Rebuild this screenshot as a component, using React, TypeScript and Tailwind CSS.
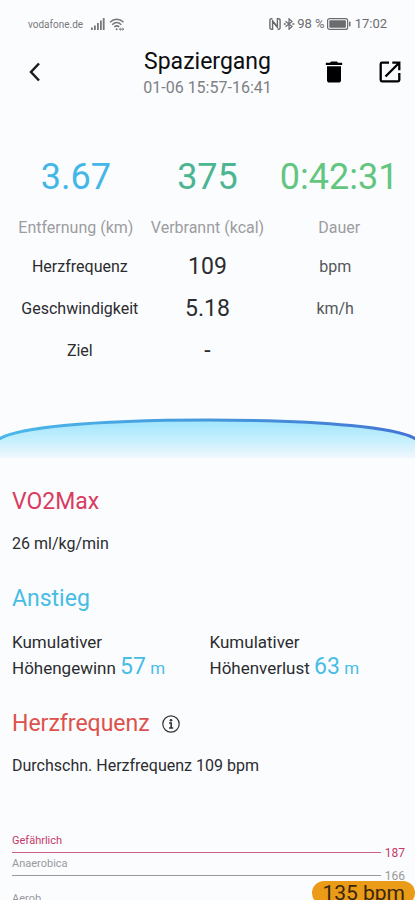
import { MdDelete } from 'react-icons/md';

const totals = [
  { value: '3.67', label: 'Entfernung (km)', color: 'text-[#45b6e8]' },
  { value: '375', label: 'Verbrannt (kcal)', color: 'text-[#4cb592]' },
  { value: '0:42:31', label: 'Dauer', color: 'text-[#62c67f]' },
];

const metrics = [
  { label: 'Herzfrequenz', value: '109', unit: 'bpm' },
  { label: 'Geschwindigkeit', value: '5.18', unit: 'km/h' },
  { label: 'Ziel', value: '-', unit: '' },
];

const climbs = [
  { label: 'Höhengewinn', value: '57' },
  { label: 'Höhenverlust', value: '63' },
];

function StatusBar() {
  return (
    <div className="flex h-12 shrink-0 items-center justify-between px-7 text-[#77787b]">
      <div className="flex items-center">
        <span className="text-[10px]">vodafone.de</span>
        <svg className="ml-2 h-3 w-[14px]" viewBox="0 0 14 12" fill="currentColor">
          <rect x="0" y="9.5" width="1.8" height="2.5" />
          <rect x="3" y="7.5" width="1.8" height="4.5" />
          <rect x="6" y="5" width="1.8" height="7" />
          <rect x="9" y="2.5" width="1.8" height="9.5" />
          <rect x="11.8" y="0" width="1.8" height="12" />
        </svg>
        <svg className="ml-1 h-[13px] w-4" viewBox="0 0 16 13" fill="none" stroke="currentColor" strokeWidth="1.5">
          <path d="M1 4.2C5 .2 10.5 .2 14.5 4.2" />
          <path d="M3.2 6.7C6 4 9.5 4 12.3 6.7" />
          <path d="M5.3 9C7 7.5 8.6 7.5 10.2 9" />
          <circle cx="7.7" cy="11.3" r="1" fill="currentColor" stroke="none" />
          <path d="M10.3 11.2h4.5M11.8 10l-1.3 1.2 1.3 1.2M13.5 10l1.3 1.2-1.3 1.2" strokeWidth="1" />
        </svg>
      </div>
      <div className="flex items-center text-[13px] text-[#6b6c6f]">
        <svg className="h-3 w-3" viewBox="0 0 12 12" fill="none" stroke="currentColor" strokeWidth="1.4">
          <path d="M3.4 .8H2.2Q.9 .8 .9 2.2v7.600q0 1.400 1.300 1.400H3.600V3l4.600 6" />
          <path d="M8.600 11.200h1.200q1.300 0 1.300-1.400V2.200q0-1.400-1.300-1.400H8.400V9L3.600 3" />
        </svg>
        <svg className="ml-0.5 h-3 w-3" viewBox="0 0 12 12" fill="none" stroke="currentColor" strokeWidth="1.2">
          <path d="M2.500 3.300l6.500 5.200-3 2.700V.8l3 2.700-6.500 5.200" />
          <path d="M.8 6h2M9.300 6h2" strokeWidth="1.5" />
        </svg>
        <span className="ml-0.5">98 %</span>
        <svg className="ml-0.5 h-3 w-6" viewBox="0 0 24 12">
          <rect x=".6" y=".6" width="20" height="10.8" rx="2" fill="none" stroke="currentColor" strokeWidth="1.2" />
          <rect x="2.3" y="2.3" width="16.6" height="7.4" rx=".6" fill="currentColor" />
          <rect x="22" y="3.5" width="1.5" height="5" rx=".7" fill="currentColor" />
        </svg>
        <span className="ml-1">17:02</span>
      </div>
    </div>
  );
}

function Header() {
  return (
    <header className="grid shrink-0 grid-cols-[1fr_auto_1fr] px-[11px]">
      <button type="button" aria-label="Zurück" className="flex h-12 w-12 items-center justify-center text-[#1b1c1e]">
        <svg className="h-6 w-6" viewBox="0 0 24 24" fill="none" stroke="currentColor" strokeWidth="2.5">
          <path d="M16 3.500L8 12l8 8.500" />
        </svg>
      </button>
      <div className="text-center">
        <h1 className="text-[23px] leading-7 text-[#0c0d0f]">Spaziergang</h1>
        <p className="text-[16px] leading-6 text-[#7e8083]">01-06 15:57-16:41</p>
      </div>
      <div className="flex h-12 items-center justify-end gap-7 text-black">
        <button type="button" aria-label="Löschen">
          <MdDelete className="h-7 w-7" />
        </button>
        <button type="button" aria-label="Teilen">
          <svg className="h-7 w-7" viewBox="0 0 28 28" fill="none" stroke="currentColor" strokeWidth="2.3">
            <path d="M13 4.700H6Q4.700 4.700 4.700 6v16q0 1.300 1.300 1.300h16q1.300 0 1.300-1.300v-7" />
            <path d="M16.300 4.700h7v7.500M23 5L9.500 18.500" />
          </svg>
        </button>
      </div>
    </header>
  );
}

function Summary() {
  return (
    <section>
      <dl className="grid grid-cols-3 px-2.5 pt-[57px] text-center">
        {totals.map((t) => (
          <div key={t.label} className="flex flex-col-reverse gap-[19px]">
            <dt className="text-[16px] leading-6 text-[#9b9da0]">{t.label}</dt>
            <dd className={`text-[36px] leading-10 ${t.color}`}>{t.value}</dd>
          </div>
        ))}
      </dl>
      <div className="px-4 pt-1.5">
        <table className="w-full table-fixed text-center text-[16px] text-[#2b2c2f]">
          <tbody>
            {metrics.map((m) => (
              <tr key={m.label} className="h-[42px]">
                <th scope="row" className="p-0 font-normal">{m.label}</th>
                <td className="p-0 text-[23px] leading-8">{m.value}</td>
                <td className="p-0 text-[#55575a]">{m.unit}</td>
              </tr>
            ))}
          </tbody>
        </table>
      </div>
    </section>
  );
}

function Curve() {
  return (
    <svg className="mt-11 h-[42px] w-full shrink-0" viewBox="0 0 415 42" preserveAspectRatio="none">
      <defs>
        <linearGradient id="line">
          <stop offset="0" stopColor="#4cb9ea" />
          <stop offset=".5" stopColor="#4598dc" />
          <stop offset="1" stopColor="#4474d4" />
        </linearGradient>
        <linearGradient id="fill" x1="0" y1="0" x2="0" y2="1">
          <stop offset="0" stopColor="#9fe5fd" />
          <stop offset=".5" stopColor="#c3effd" />
          <stop offset="1" stopColor="#f2f7fd" />
        </linearGradient>
      </defs>
      <path d="M-3 24.500C12 12 90 4 207.500 4S403 12 418 24.500V42H-3z" fill="url(#fill)" />
      <path d="M-3 24.500C12 12 90 4 207.500 4S403 12 418 24.500" fill="none" stroke="url(#line)" strokeWidth="3" />
    </svg>
  );
}

function Zone({ name, limit, color, line }: { name: string; limit: string; color: string; line: string }) {
  return (
    <div className={color}>
      <div className="text-[11px] leading-4">{name}</div>
      <div className="flex h-[7px] items-center gap-1 text-[12px]">
        <span className={`h-px flex-1 ${line}`} />
        <span className="leading-none">{limit}</span>
      </div>
    </div>
  );
}

export default function App() {
  return (
    <main className="flex h-screen flex-col overflow-hidden bg-[#fbfcfe] font-['Roboto',sans-serif]">
      <StatusBar />
      <Header />
      <Summary />
      <Curve />

      <div className="px-3 pt-7 text-[16px] leading-6 text-[#2b2c2f]">
        <section>
          <h2 className="text-[23px] leading-8 text-[#d93c62]">VO2Max</h2>
          <p className="mt-3.5">26 ml/kg/min</p>
        </section>

        <section className="mt-[27px]">
          <h2 className="text-[23px] leading-8 text-[#47bde6]">Anstieg</h2>
          <div className="mt-3.5 grid grid-cols-2 gap-x-1 text-[17px]">
            {climbs.map((c) => (
              <p key={c.label} className="leading-[26px]">
                Kumulativer
                <br />
                {c.label}{' '}
                <span className="leading-none text-[#47bde6]">
                  <span className="text-[23px] leading-none">{c.value}</span> m
                </span>
              </p>
            ))}
          </div>
        </section>

        <section className="mt-[27px]">
          <div className="flex items-center gap-3">
            <h2 className="text-[23px] leading-8 text-[#dd514c]">Herzfrequenz</h2>
            <button type="button" aria-label="Info" className="text-[#333437]">
              <svg className="h-[18px] w-[18px]" viewBox="0 0 18 18" fill="none" stroke="currentColor">
                <circle cx="9" cy="9" r="8.2" strokeWidth="1.2" />
                <circle cx="9" cy="5.2" r="1.3" fill="currentColor" stroke="none" />
                <path d="M7 8h2.200v5M7 13h4.200" strokeWidth="1.6" />
              </svg>
            </button>
          </div>
          <p className="mt-3.5">Durchschn. Herzfrequenz 109 bpm</p>
        </section>
      </div>

      <section className="relative mt-[55px] shrink-0 pr-2.5 pl-3">
        <Zone name="Gefährlich" limit="187" color="text-[#c43a66]" line="bg-[#cf5f80]" />
        <Zone name="Anaerobica" limit="166" color="text-[#98999c]" line="bg-[#98999c]" />
        <div className="pt-3">
          <Zone name="Aerob" limit="145" color="text-[#98999c]" line="bg-[#98999c]" />
        </div>
        {/* current reading, floats over the zones */}
        <div className="absolute top-12 right-0 rounded-full bg-[#ea9b17] px-2.5 text-[21px] leading-6 text-[#38270a]">
          135 bpm
        </div>
      </section>
    </main>
  );
}
